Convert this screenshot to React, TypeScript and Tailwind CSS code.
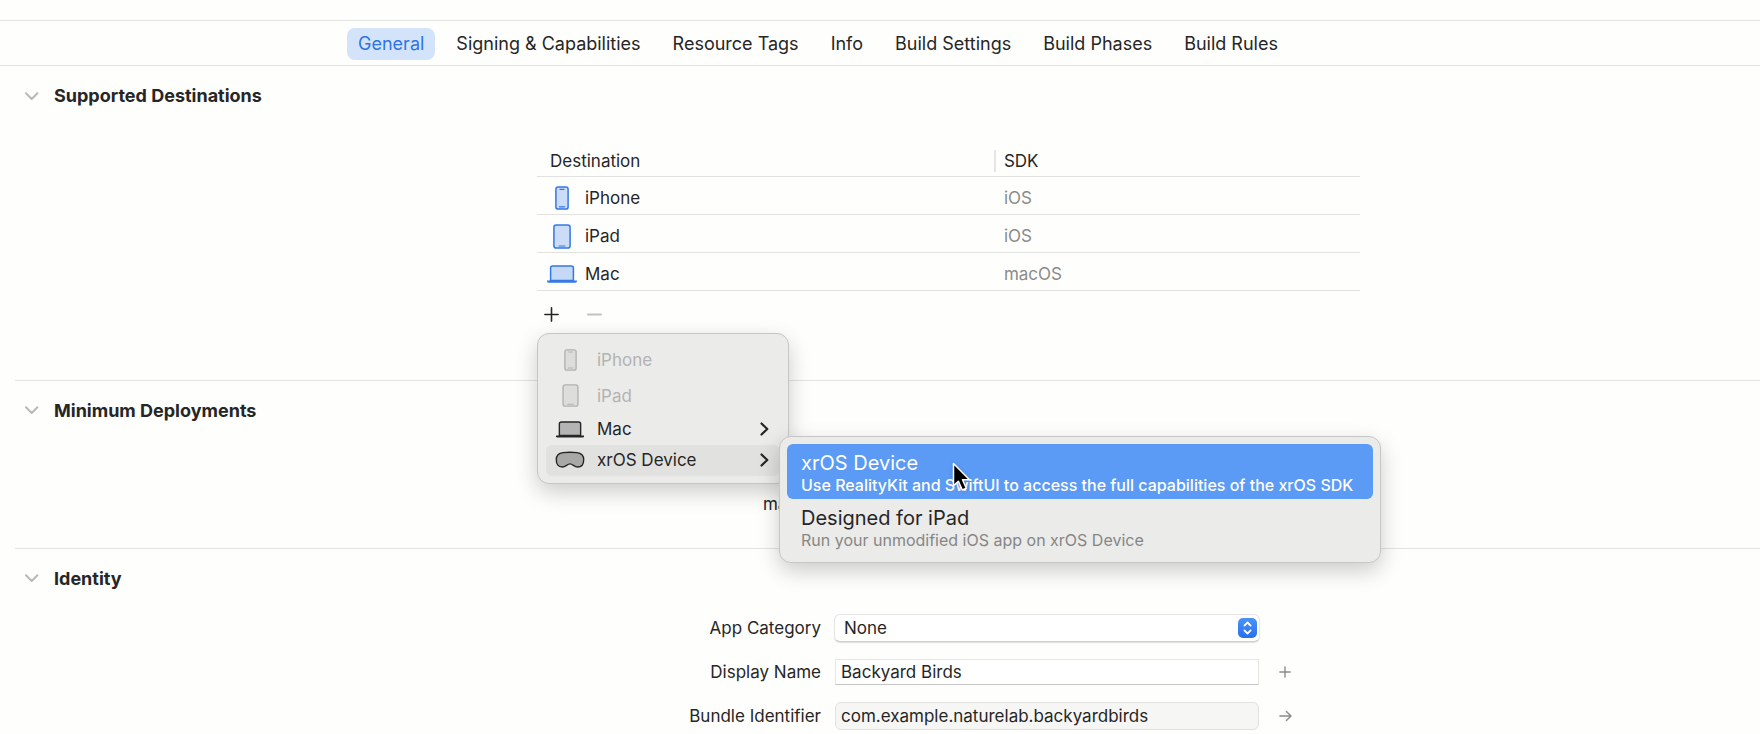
import type { ReactNode } from "react";
import { clsx } from "clsx";

const tabs = [
  "General",
  "Signing & Capabilities",
  "Resource Tags",
  "Info",
  "Build Settings",
  "Build Phases",
  "Build Rules",
];

const PhoneIcon = ({ className }: { className?: string }) => (
  <svg viewBox="0 0 14 24" className={className} stroke="currentColor" aria-hidden="true">
    <rect x="0.9" y="0.9" width="12.2" height="22.2" rx="2.2" fill="currentColor" fillOpacity="0.25" strokeWidth="1.5" />
    <path d="M5 3.3h4M4.4 20.8h5.2" strokeWidth="1.2" strokeLinecap="round" />
  </svg>
);

const PadIcon = ({ className }: { className?: string }) => (
  <svg viewBox="0 0 18 25" className={className} stroke="currentColor" aria-hidden="true">
    <rect x="0.9" y="0.9" width="16.2" height="23.2" rx="2.4" fill="currentColor" fillOpacity="0.25" strokeWidth="1.5" />
    <path d="M6 22h6" strokeWidth="1.2" strokeLinecap="round" />
  </svg>
);

const LaptopIcon = ({ className }: { className?: string }) => (
  <svg viewBox="0 0 30 18" className={className} stroke="currentColor" aria-hidden="true">
    <path
      d="M3.6 15.5V3q0-2.1 2.1-2.1h18.6q2.1 0 2.1 2.1v12.5z"
      fill="currentColor"
      fillOpacity="0.28"
      strokeWidth="1.5"
    />
    <path d="M0 15.4h30v.7q0 1.6-1.6 1.6H1.6Q0 17.7 0 16.1z" fill="currentColor" stroke="none" />
  </svg>
);

const HeadsetIcon = ({ className }: { className?: string }) => (
  <svg viewBox="0 0 30 18" className={className} stroke="currentColor" aria-hidden="true">
    <path
      d="M8 1.6Q15 .9 22 1.6Q28.6 2.4 28.7 8.4Q28.7 16 22.6 16C19.4 16 17.6 12.9 15 12.9S10.6 16 7.4 16Q1.3 16 1.3 8.4Q1.4 2.4 8 1.6z"
      fill="currentColor"
      fillOpacity="0.3"
      strokeWidth="1.4"
      strokeLinejoin="round"
    />
  </svg>
);

const SubmenuArrow = () => (
  <svg viewBox="0 0 9 14" className="h-3.5 w-[9px]" fill="none" stroke="currentColor" aria-hidden="true">
    <path d="M1.5 1.5L7.3 7l-5.8 5.5" strokeWidth="2.2" strokeLinecap="round" strokeLinejoin="round" />
  </svg>
);

const destinations = [
  { name: "iPhone", sdk: "iOS", icon: <PhoneIcon className="h-6 w-3.5" /> },
  { name: "iPad", sdk: "iOS", icon: <PadIcon className="h-[25px] w-[18px]" /> },
  { name: "Mac", sdk: "macOS", icon: <LaptopIcon className="h-[18px] w-[30px]" /> },
];

const Section = ({ title, last, children }: { title: string; last?: boolean; children: ReactNode }) => (
  <section>
    <h2 className="pt-[18px] pl-6">
      <button type="button" aria-expanded="true" className="flex h-6 items-center gap-[15px] text-lg leading-6 font-bold">
        <svg viewBox="0 0 15 9" className="h-[9px] w-[15px]" fill="none" stroke="#b9b9b9" aria-hidden="true">
          <path d="M2 1.2l5.7 5.8 5.7-5.8" strokeWidth="2" strokeLinecap="round" strokeLinejoin="round" />
        </svg>
        {title}
      </button>
    </h2>
    {children}
    {!last && <div className="ml-[15px] h-px bg-[#e2e2e1]" />}
  </section>
);

const Pointer = () => (
  <svg
    viewBox="0 0 20 30"
    className="pointer-events-none absolute top-[18px] left-[165px] h-[30px] w-5 drop-shadow-sm"
    aria-hidden="true"
  >
    <path
      d="M1.5 1.5v22.3l4.9-4.6 3.9 8.8 4-1.7-3.8-8.6h7z"
      fill="#000"
      stroke="#fff"
      strokeWidth="1.5"
      strokeLinejoin="round"
    />
  </svg>
);

const Submenu = () => (
  <div
    role="menu"
    className="absolute top-[-9px] left-[233px] z-20 w-[602px] rounded-xl border border-[#c6c6c5] bg-[#ebebea] px-[7px] pt-[7px] pb-2 shadow-[0_8px_22px_rgba(0,0,0,0.2)]"
  >
    <button
      type="button"
      role="menuitem"
      className="relative block h-[55px] w-full rounded-md bg-[#5b9af5] px-3.5 pt-[3px] text-left text-white"
    >
      <span className="block text-xl leading-6">xrOS Device</span>
      <span className="block text-base leading-5 font-medium whitespace-nowrap">
        Use RealityKit and SwiftUI to access the full capabilities of the xrOS SDK
      </span>
      <Pointer />
    </button>
    <button type="button" role="menuitem" className="block h-[55px] w-full px-3.5 pt-[3px] text-left">
      <span className="block text-xl leading-6">Designed for iPad</span>
      <span className="block text-base leading-5 text-[#868685]">Run your unmodified iOS app on xrOS Device</span>
    </button>
  </div>
);

const MenuItem = ({
  icon,
  label,
  disabled,
  active,
  arrow,
}: {
  icon: ReactNode;
  label: string;
  disabled?: boolean;
  active?: boolean;
  arrow?: boolean;
}) => (
  <button
    type="button"
    role="menuitem"
    disabled={disabled}
    className={clsx(
      "flex w-full items-center rounded-md pr-[11px] pl-[9px]",
      disabled ? "h-9 text-[#b3b3b2]" : "h-[31px]",
      active && "bg-[#e1e1e0]",
    )}
  >
    <span className="flex w-[30px] justify-center">{icon}</span>
    <span className="ml-3">{label}</span>
    {arrow && (
      <span className="ml-auto">
        <SubmenuArrow />
      </span>
    )}
  </button>
);

const AddMenu = () => (
  <div
    role="menu"
    className="absolute top-[30px] left-0 z-10 w-[252px] rounded-xl border border-[#c6c6c5] bg-[#ebebea] px-2 pt-2 pb-[7px] shadow-[0_8px_22px_rgba(0,0,0,0.2)]"
  >
    <MenuItem disabled icon={<PhoneIcon className="h-[22px] w-[13px]" />} label="iPhone" />
    <MenuItem disabled icon={<PadIcon className="h-[23px] w-[17px]" />} label="iPad" />
    <MenuItem arrow icon={<LaptopIcon className="h-[17px] w-[28px]" />} label="Mac" />
    <div className="relative">
      <MenuItem active arrow icon={<HeadsetIcon className="h-[18px] w-[30px]" />} label="xrOS Device" />
      <Submenu />
    </div>
  </div>
);

const DestinationTable = () => (
  <div className="grid grid-cols-[537fr_823fr_400fr] pt-9 pb-[53px]">
    <div className="col-start-2">
      <table className="w-full table-fixed border-collapse text-left">
        <thead>
          <tr className="h-8 border-b border-[#e2e2e1]">
            <th className="w-[56%] pt-0.5 pl-[13px] font-normal">Destination</th>
            <th className="pt-0.5 font-normal">
              <span className="-ml-1 flex h-[22px] items-center border-l-2 border-[#e6e6e5] pl-2">SDK</span>
            </th>
          </tr>
        </thead>
        <tbody>
          {destinations.map((d) => (
            <tr key={d.name} className="h-[38px] border-b border-[#e2e2e1]">
              <td className="pt-1.5 pl-2.5">
                <span className="flex h-6 items-center gap-2">
                  <span className="flex w-[30px] justify-center text-[#3478e5]">{d.icon}</span>
                  {d.name}
                </span>
              </td>
              <td className="pt-1.5 pl-1.5 text-[#8b8b8a]">{d.sdk}</td>
            </tr>
          ))}
        </tbody>
      </table>
      <div className="relative mt-3 flex h-6 items-center gap-7 pl-[7px]">
        <button type="button" aria-label="Add destination">
          <svg viewBox="0 0 15 15" className="size-[15px]" stroke="#262626" strokeWidth="1.6" strokeLinecap="round">
            <path d="M7.5 .9v13.2M.9 7.5h13.2" />
          </svg>
        </button>
        <button type="button" aria-label="Remove destination" disabled>
          <svg viewBox="0 0 15 15" className="size-[15px]" stroke="#c2c2c1" strokeWidth="1.8" strokeLinecap="round">
            <path d="M.9 7.5h13.2" />
          </svg>
        </button>
        <AddMenu />
      </div>
    </div>
  </div>
);

const FormRow = ({
  id,
  label,
  children,
  action,
}: {
  id: string;
  label: string;
  children: ReactNode;
  action?: ReactNode;
}) => (
  <div className="grid h-7 grid-cols-[834fr_426fr_500fr] items-center">
    <label htmlFor={id} className="pr-[13px] text-right">
      {label}
    </label>
    {children}
    <div className="flex pl-[19px] text-[#8b8b8a]">{action}</div>
  </div>
);

const IdentityForm = () => (
  <form className="flex flex-col gap-4 pt-[23px]">
    <FormRow id="category" label="App Category">
      <div className="relative">
        <select
          id="category"
          className="block h-7 w-full appearance-none rounded-md border border-[#e6e6e5] border-b-[#cfcfce] bg-white px-[9px] shadow-[0_1px_1px_rgba(0,0,0,0.12)]"
        >
          <option>None</option>
        </select>
        <span className="pointer-events-none absolute top-1 right-[3px] flex h-5 w-[19px] items-center justify-center rounded-[5px] bg-linear-to-b from-[#4a93f7] to-[#2a6df0]">
          <svg viewBox="0 0 9 14" className="h-3.5 w-[9px]" fill="none" stroke="#fff" aria-hidden="true">
            <path
              d="M1.4 4.6l3.1-3.1 3.1 3.1M1.4 9.4l3.1 3.1 3.1-3.1"
              strokeWidth="1.8"
              strokeLinecap="round"
              strokeLinejoin="round"
            />
          </svg>
        </span>
      </div>
    </FormRow>
    <FormRow
      id="name"
      label="Display Name"
      action={
        <button type="button" aria-label="Localize display name">
          <svg viewBox="0 0 12 12" className="size-3" stroke="currentColor" strokeWidth="1.4" strokeLinecap="round">
            <path d="M6 .9v10.2M.9 6h10.2" />
          </svg>
        </button>
      }
    >
      <input
        id="name"
        type="text"
        defaultValue="Backyard Birds"
        className="mx-px h-[26px] border border-[#e6e6e5] border-b-[#c6c6c5] bg-white px-[5px]"
      />
    </FormRow>
    <FormRow
      id="bundle"
      label="Bundle Identifier"
      action={
        <button type="button" aria-label="Show bundle identifier">
          <svg viewBox="0 0 13 12" className="h-3 w-[13px]" fill="none" stroke="currentColor" aria-hidden="true">
            <path
              d="M.9 6h11M7.4 1.4L12 6l-4.6 4.6"
              strokeWidth="1.4"
              strokeLinecap="round"
              strokeLinejoin="round"
            />
          </svg>
        </button>
      }
    >
      <input
        id="bundle"
        type="text"
        readOnly
        defaultValue="com.example.naturelab.backyardbirds"
        className="mx-px h-7 rounded-md border border-[#e2e2e1] bg-[#f6f6f5] px-[5px]"
      />
    </FormRow>
  </form>
);

export default function App() {
  return (
    <div className="min-h-screen overflow-hidden bg-[#fefefd] pt-5 font-['Inter',sans-serif] text-[17px] leading-6 text-[#262626]">
      <nav className="flex justify-center gap-2.5 border-y border-[#e2e2e1] pt-[7px] pb-[5px] pr-[124px]">
        {tabs.map((tab, i) => (
          <button
            key={tab}
            type="button"
            className={clsx(
              "h-8 rounded-lg px-[11px] text-lg leading-6 whitespace-nowrap",
              i === 0 && "bg-[#d3e4fa] text-[#2f74e6]",
            )}
          >
            {tab}
          </button>
        ))}
      </nav>
      <main>
        <Section title="Supported Destinations">
          <DestinationTable />
        </Section>
        <Section title="Minimum Deployments">
          <div className="grid grid-cols-[834fr_926fr] pt-[69px] pb-8">
            <span className="pr-[13px] text-right">macOS</span>
          </div>
        </Section>
        <Section title="Identity" last>
          <IdentityForm />
        </Section>
      </main>
    </div>
  );
}
